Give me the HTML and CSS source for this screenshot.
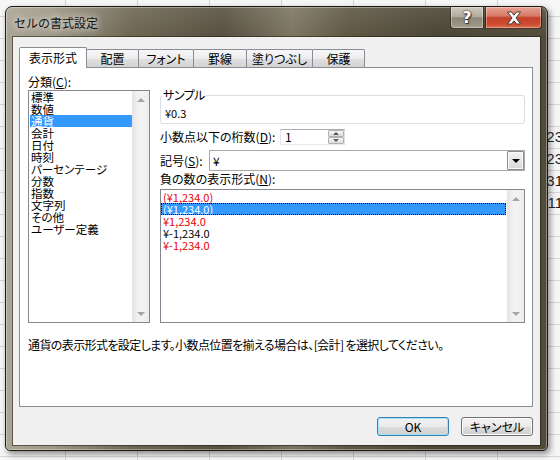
FILE: index.html
```html
<!DOCTYPE html>
<html lang="ja">
<head>
<meta charset="utf-8">
<title>セルの書式設定</title>
<link rel="stylesheet" href="styles.css">
</head>
<body>
<div class="sheet-left"></div>
<div class="dialog">
  <div class="titlebar">
    <span class="title">セルの書式設定</span>
    <div class="caption-btns">
      <div class="cap help">?</div>
      <div class="cap close">
        <svg width="16" height="14" viewBox="0 0 16 14"><path d="M1.5 1 H5.5 L8 4.2 L10.5 1 H14.5 L10 7 L14.5 13 H10.5 L8 9.8 L5.5 13 H1.5 L6 7 Z" fill="#fff" stroke="#4a3a36" stroke-width="1" stroke-linejoin="round"/></svg>
      </div>
    </div>
  </div>
  <div class="client">
    <div class="tabs">
      <div class="tab active t1">表示形式</div>
      <div class="tab t2">配置</div>
      <div class="tab t3">フォント</div>
      <div class="tab t4">罫線</div>
      <div class="tab t5">塗りつぶし</div>
      <div class="tab t6">保護</div>
    </div>
    <div class="panel">
      <div class="cols">
        <div class="cat-col">
          <div class="lbl">分類(<u>C</u>):</div>
          <div class="listbox cat-list">
            <ul class="items">
              <li>標準</li>
              <li>数値</li>
              <li class="sel">通貨</li>
              <li>会計</li>
              <li>日付</li>
              <li>時刻</li>
              <li>パーセンテージ</li>
              <li>分数</li>
              <li>指数</li>
              <li>文字列</li>
              <li>その他</li>
              <li>ユーザー定義</li>
            </ul>
            <div class="vscroll"><span class="arr up"></span><span class="arr down"></span></div>
          </div>
        </div>
        <div class="detail-col">
          <div class="sample">
            <span class="sample-legend">サンプル</span>
            <div class="sample-value">¥0.3</div>
          </div>
          <div class="row decimals">
            <span class="row-lbl w-dec">小数点以下の桁数(<u>D</u>):</span>
            <div class="spin">
              <span class="spin-val">1</span>
              <div class="spin-btns">
                <span class="sb"><i class="tri-up"></i></span>
                <span class="sb"><i class="tri-down"></i></span>
              </div>
            </div>
          </div>
          <div class="row symbol">
            <span class="row-lbl w-sym">記号(<u>S</u>):</span>
            <div class="combo">
              <span class="combo-val">¥</span>
              <span class="drop"><i class="tri-drop"></i></span>
            </div>
          </div>
          <div class="lbl neg-lbl">負の数の表示形式(<u>N</u>):</div>
          <div class="listbox neg-list">
            <ul class="items">
              <li class="red">(¥1,234.0)</li>
              <li class="sel focus">(¥1,234.0)</li>
              <li class="red">¥1,234.0</li>
              <li>¥-1,234.0</li>
              <li class="red">¥-1,234.0</li>
            </ul>
            <div class="vscroll"><span class="arr up"></span><span class="arr down"></span></div>
          </div>
        </div>
      </div>
      <p class="desc">通貨の表示形式を設定します。小数点位置を揃える場合は、[会計] を選択してください。</p>
    </div>
    <div class="buttons">
      <button class="btn default">OK</button>
      <button class="btn">キャンセル</button>
    </div>
  </div>
</div>
<div class="sheet-right">
  <div class="cell">23</div>
  <div class="cell">23</div>
  <div class="cell">31</div>
  <div class="cell">11</div>
</div>
</body>
</html>
```

FILE: styles.css
```css
* { box-sizing: border-box; }
html, body { margin: 0; padding: 0; }
body {
  width: 560px;
  height: 460px;
  overflow: hidden;
  display: flex;
  align-items: flex-start;
  font-family: "Noto Sans CJK JP", "Noto Sans", sans-serif;
  font-feature-settings: "palt";
  font-size: 12px;
  line-height: 12px;
  color: #000;
  background-color: #f6f6f6;
  background-image:
    linear-gradient(90deg, #d2d2d2 1px, transparent 1px),
    linear-gradient(#d6d6d6 1px, transparent 1px);
  background-size: 72px 22px, 72px 22px;
  background-position: 65px 0, 0 16px;
}

.sheet-left { flex: none; width: 5px; height: 460px; }

.sheet-right {
  flex: none;
  width: 12px;
  height: 460px;
  padding-top: 126px;
  display: flex;
  flex-direction: column;
  overflow: hidden;
}
.cell {
  height: 22px;
  margin-right: -3px;
  display: flex;
  justify-content: flex-end;
  align-items: center;
  overflow: hidden;
  font-family: "Liberation Sans", sans-serif;
  font-feature-settings: normal;
  font-size: 15px;
  line-height: 16px;
  color: #222;
}

/* ---------- dialog frame ---------- */
.dialog {
  flex: none;
  width: 543px;
  height: 445px;
  margin-top: 6px;
  padding: 0 7px 5px 7px;
  display: flex;
  flex-direction: column;
  border: 1px solid #1f1b12;
  border-radius: 7px 7px 5px 5px;
  background:
    linear-gradient(180deg, rgba(255,255,255,0.10), rgba(255,255,255,0) 30px),
    linear-gradient(90deg, #aba595 0%, #9c9684 9%, #6d6653 23%, #57503f 40%, #7c7562 53%, #5e5744 63%, #4b4535 80%, #514b3b 100%);
  box-shadow: inset 0 0 0 1px rgba(255,255,255,0.35), 2px 3px 6px rgba(0,0,0,0.45);
}

.titlebar {
  flex: none;
  height: 30px;
  display: flex;
  align-items: flex-start;
}
.title {
  margin-top: 9px;
  margin-left: 1px;
  font-size: 12px;
  line-height: 14px;
  color: #111;
  font-feature-settings: normal;
  text-shadow: 0 0 6px rgba(255,255,255,0.9), 0 0 10px rgba(255,255,255,0.6);
}
.caption-btns {
  margin-left: auto;
  margin-right: -2px;
  display: flex;
  gap: 1px;
}
.cap {
  height: 22px;
  border: 1px solid rgba(20,16,8,0.75);
  border-top: none;
  display: flex;
  align-items: center;
  justify-content: center;
  box-shadow: inset 0 0 0 1px rgba(255,255,255,0.35);
}
.help {
  width: 34px;
  border-radius: 0 0 0 4px;
  background: linear-gradient(180deg, #cdc8bd 0%, #b3ad9f 45%, #8c8676 52%, #a39d8c 100%);
  color: #fff;
  font-family: "DejaVu Sans", sans-serif;
  font-weight: bold;
  font-size: 16px;
  line-height: 16px;
  text-shadow: 0 0 1px #222, 0 0 2px #333, 1px 1px 1px #333;
}
.close {
  width: 57px;
  border-radius: 0 0 4px 0;
  background: linear-gradient(180deg, #e6a395 0%, #d77a66 42%, #c3402a 52%, #cd4a30 80%, #dc6a48 100%);
}
.close svg { display: block; }

/* ---------- client area ---------- */
.client {
  flex: 1;
  background: #f0f0f0;
  padding: 10px 7px 0 6px;
  box-shadow: 0 0 0 1px rgba(30,25,15,0.55);
  display: flex;
  flex-direction: column;
}

.tabs {
  position: relative;
  z-index: 2;
  height: 21px;
  margin-bottom: -1px;
  display: flex;
  align-items: flex-end;
}
.tab {
  height: 18px;
  margin-bottom: 1px;
  margin-left: -1px;
  border: 1px solid #898c95;
  border-bottom: none;
  border-radius: 2px 2px 0 0;
  background: linear-gradient(180deg, #f7f7f7 0%, #ececec 50%, #e0e0e0 51%, #d3d3d3 100%);
  display: flex;
  align-items: center;
  justify-content: center;
  font-size: 12px;
}
.tab.active {
  height: 21px;
  margin-bottom: 0;
  background: #fff;
  position: relative;
  z-index: 3;
  padding-bottom: 1px;
}
.t1 { width: 68px; margin-left: 0; }
.t2 { width: 53px; }
.t3 { width: 56px; }
.t4 { width: 54px; }
.t5 { width: 67px; }
.t6 { width: 53px; }

.panel {
  position: relative;
  z-index: 1;
  width: 514px;
  height: 340px;
  flex: none;
  background: #fff;
  border: 1px solid #898c95;
  padding: 8px 7px 0 8px;
}

.cols {
  display: flex;
  gap: 10px;
  align-items: flex-start;
}
.cat-col { width: 122px; flex: none; }
.detail-col { width: 365px; flex: none; }

.lbl { line-height: 12px; height: 12px; white-space: nowrap; }
.cat-col .lbl { margin-bottom: 2px; }

.listbox {
  border: 1px solid #828790;
  display: flex;
  background: #fff;
}
.cat-list { height: 233px; }
.neg-list { height: 134px; margin-top: 4px; }

.items {
  list-style: none;
  margin: 0;
  padding: 0 0 0 1px;
  flex: 1;
  min-width: 0;
  font-size: 11.5px;
}
.neg-list .items { padding: 1px 1px 0 0; font-size: 11px; }
.items li {
  height: 12px;
  line-height: 12px;
  padding-left: 1px;
  white-space: nowrap;
}
.neg-list .items li { padding-left: 2px; }
.items li.red { color: #e80000; }
.items li.sel { background: #3399ff; color: #fff; }
.items li.focus { outline: 1px dotted #000; outline-offset: -1px; }

.vscroll {
  flex: none;
  width: 17px;
  display: flex;
  flex-direction: column;
  justify-content: space-between;
  background: linear-gradient(90deg, #e3e3e3 0%, #f0f0f0 30%, #f3f3f3 60%, #ececec 100%);
}
.arr {
  height: 17px;
  display: flex;
  align-items: center;
  justify-content: center;
}
.arr::before {
  content: "";
  width: 0;
  height: 0;
  border-left: 4px solid transparent;
  border-right: 4px solid transparent;
}
.arr.up::before { border-bottom: 4px solid #a6a6a6; }
.arr.down::before { border-top: 4px solid #a6a6a6; }

/* sample group box */
.sample {
  margin-top: 19px;
  height: 29px;
  border: 1px solid #d5dfe5;
  border-radius: 3px;
  padding: 0 4px;
}
.sample-legend {
  display: block;
  width: max-content;
  margin: -7px 0 0 -3px;
  padding: 0 1px;
  background: #fff;
  line-height: 12px;
  letter-spacing: -0.5px;
}
.sample-value { margin-top: 6px; line-height: 12px; font-size: 11px; }

.row {
  display: flex;
  align-items: center;
  margin-top: 5px;
}
.row-lbl { flex: none; white-space: nowrap; }
.w-dec { width: 120px; }
.w-sym { width: 49px; }

.spin {
  width: 65px;
  height: 16px;
  border: 1px solid #abadb3;
  border-color: #abadb3 #dbdfe6 #e3e9ef #e2e3ea;
  display: flex;
  align-items: center;
  padding-left: 4px;
}
.spin-val { line-height: 12px; }
.spin-btns {
  margin-left: auto;
  width: 16px;
  height: 14px;
  display: flex;
  flex-direction: column;
}
.sb {
  height: 7px;
  border: 1px solid #b0b0b0;
  border-radius: 1px;
  background: linear-gradient(180deg, #f8f8f8, #dcdcdc);
  display: flex;
  align-items: center;
  justify-content: center;
}
.tri-up, .tri-down {
  width: 0; height: 0;
  border-left: 3px solid transparent;
  border-right: 3px solid transparent;
}
.tri-up { border-bottom: 3px solid #555; }
.tri-down { border-top: 3px solid #555; }

.combo {
  flex: 1;
  height: 21px;
  border: 1px solid #a8a8a8;
  display: flex;
  align-items: center;
  padding-left: 3px;
  background: #fff;
}
.combo-val { line-height: 12px; }
.drop {
  margin-left: auto;
  width: 17px;
  height: 19px;
  border: 1px solid #8c8c8c;
  border-radius: 1px;
  background: linear-gradient(180deg, #f4f4f4 0%, #e6e6e6 50%, #d6d6d6 100%);
  box-shadow: inset 0 0 0 1px #fafafa;
  display: flex;
  align-items: center;
  justify-content: center;
}
.tri-drop {
  width: 0; height: 0;
  border-left: 4px solid transparent;
  border-right: 4px solid transparent;
  border-top: 4px solid #000;
}

.neg-lbl { margin-top: 2px; }

.desc {
  margin: 16px 0 0 0;
  line-height: 12px;
  white-space: nowrap;
  letter-spacing: -0.6px;
}

/* buttons */
.buttons {
  margin-top: 10px;
  display: flex;
  justify-content: flex-end;
  gap: 12px;
}
.btn {
  width: 72px;
  height: 19px;
  padding: 0;
  font-family: inherit;
  font-feature-settings: "palt";
  font-size: 12px;
  line-height: 12px;
  color: #000;
  border: 1px solid #707070;
  border-radius: 3px;
  background: linear-gradient(180deg, #f2f2f2 0%, #ebebeb 50%, #dddddd 51%, #cfcfcf 100%);
  box-shadow: inset 0 0 0 1px #fbfbfb;
}
.btn.default {
  border-color: #3c7fb1;
  box-shadow: inset 0 0 0 1px #9ee3fb;
}
```
